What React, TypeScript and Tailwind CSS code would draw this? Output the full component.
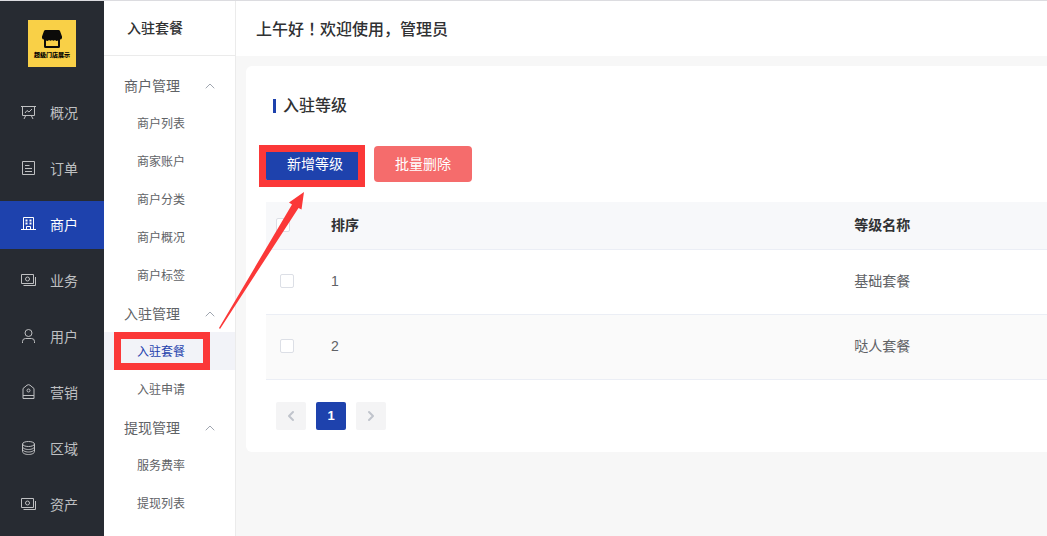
import type { ReactNode } from 'react';
import { ChevronLeft, ChevronRight, ChevronUp } from 'lucide-react';

interface NavItem {
  label: string;
  icon: ReactNode;
  active?: boolean;
}

interface MenuGroup {
  title: string;
  items: string[];
}

interface Level {
  sort: number;
  name: string;
}

const walletIcon = (
  <>
    <path d="M1.500 1.500h12v9h-12z" />
    <path d="M15.500 4v8.500h-12" />
    <circle cx="7.500" cy="6" r="2" />
  </>
);

const navItems: NavItem[] = [
  {
    label: '概况',
    icon: (
      <>
        <path d="M1 1.500h15M2.500 1.500v9h12v-9M5.500 11l-1.500 3M11.500 11l1.500 3" />
        <path d="M5 8l2-2.500 2 1.500 3-3" />
      </>
    ),
  },
  {
    label: '订单',
    icon: <path d="M2.500 .5h12v13h-12zM5 4.500h4.500M5 7.500h7M5 10.500h7" />,
  },
  {
    label: '商户',
    active: true,
    icon: (
      <>
        <path d="M3.500 12.500V.5h10v12M1 12.500h15" />
        <path d="M5.500 3.500h2M9.500 3.500h2M5.500 6.500h2M9.500 6.500h2" strokeWidth="2" />
        <path d="M6.500 12V9.500h4V12" />
      </>
    ),
  },
  { label: '业务', icon: walletIcon },
  {
    label: '用户',
    icon: (
      <>
        <circle cx="8.500" cy="4" r="3.500" />
        <path d="M2.500 14v-1.500a3 3 0 0 1 3-3h6a3 3 0 0 1 3 3V14" />
      </>
    ),
  },
  {
    label: '营销',
    icon: (
      <>
        <path d="M3 13.500V3.500L7 .2q1.500-1 3 0l4 3.300v10zM3 10.500h11" />
        <circle cx="8.500" cy="5.500" r="1.500" />
      </>
    ),
  },
  {
    label: '区域',
    icon: (
      <>
        <ellipse cx="8.500" cy="3" rx="6" ry="2.500" />
        <path d="M2.500 3v7.500c0 1.700 2.700 3 6 3s6-1.300 6-3V3" />
        <path d="M2.500 5.500c0 1.700 2.700 3 6 3s6-1.300 6-3M2.500 8c0 1.700 2.700 3 6 3s6-1.300 6-3" />
      </>
    ),
  },
  { label: '资产', icon: walletIcon },
];

const menuGroups: MenuGroup[] = [
  {
    title: '商户管理',
    items: ['商户列表', '商家账户', '商户分类', '商户概况', '商户标签'],
  },
  { title: '入驻管理', items: ['入驻套餐', '入驻申请'] },
  { title: '提现管理', items: ['服务费率', '提现列表'] },
];

const currentMenu = '入驻套餐';

const levels: Level[] = [
  { sort: 1, name: '基础套餐' },
  { sort: 2, name: '哒人套餐' },
];

const Logo = () => (
  <div className="mx-auto flex h-[47px] w-12 flex-col items-center bg-[#f9d047] pt-2.5">
    <svg width="20" height="18" viewBox="0 0 20 18" aria-hidden="true">
      <path
        d="M3.500 0h13q1 0 1.500 1l2 5.500V8q-.5 1.500-2 1.500v7q0 1.500-1.500 1.500h-13Q2 18 2 16.500v-7Q.5 9.500 0 8V6.500L2 1q.5-1 1.500-1z"
        fill="#0c0b09"
      />
      <path d="M4 10.500q1.500 1 3-.5 1.500 1.500 3 0 1.500 1.500 3 0 1.500 1.500 3 .5V16H4z" fill="#f9d047" />
    </svg>
    <span className="whitespace-nowrap text-[6px] leading-[15px] font-black text-black">
      超级门店展示
    </span>
  </div>
);

const Sidebar = () => (
  <aside className="w-26 shrink-0 bg-[#272b32] pt-[19px]">
    <Logo />
    <nav className="mt-[22px] flex flex-col gap-2">
      {navItems.map((item) => (
        <a
          key={item.label}
          href="#"
          className={`flex h-12 items-center gap-3.5 pl-5 text-sm ${
            item.active ? 'bg-[#1e42ad] text-white' : 'text-[#bfc0c2]'
          }`}
        >
          <svg
            width="16"
            height="16"
            viewBox="0 0 16 16"
            fill="none"
            stroke="currentColor"
            className="overflow-visible"
            aria-hidden="true"
          >
            {item.icon}
          </svg>
          {item.label}
        </a>
      ))}
    </nav>
  </aside>
);

const SubMenu = () => (
  <aside className="w-33 shrink-0 border-r border-[#ebebeb] bg-white">
    <h2 className="flex h-[55px] items-center border-b border-[#ebebeb] pl-[23px] text-sm font-medium text-[#303133]">
      入驻套餐
    </h2>
    <nav className="pt-2.5">
      {menuGroups.map((group) => (
        <div key={group.title}>
          <button
            type="button"
            className="flex h-[38px] w-full items-center justify-between pt-0.5 pr-[17px] pl-5 text-sm text-[#606266]"
          >
            {group.title}
            <ChevronUp className="h-4 w-4 text-[#a0a6b0]" strokeWidth={1.5} />
          </button>
          {group.items.map((item) => (
            <a
              key={item}
              href="#"
              className={`relative flex h-[38px] items-center pt-0.5 pl-[33px] text-xs ${
                item === currentMenu ? 'bg-[#f2f3f8] text-[#1e42ad]' : 'text-[#606266]'
              }`}
            >
              {item}
              {item === currentMenu && (
                <span className="absolute inset-y-0 left-2.5 w-24 border-[7px] border-[#fb3838]" />
              )}
            </a>
          ))}
        </div>
      ))}
    </nav>
  </aside>
);

const Checkbox = ({ label }: { label: string }) => (
  <input
    type="checkbox"
    aria-label={label}
    className="block h-3.5 w-3.5 appearance-none rounded-xs border border-[#dcdfe6] bg-white checked:bg-[#1e42ad]"
  />
);

const LevelTable = () => (
  <table className="w-full table-fixed text-left text-sm text-[#606266]">
    <thead>
      <tr className="h-[47px] border-b border-[#ebeef5] bg-[#f7f8fa] text-[#303133]">
        <th className="w-[55px] pl-2.5">
          <Checkbox label="全选" />
        </th>
        <th className="w-[67%] px-2.5 font-bold">排序</th>
        <th className="px-2.5 font-bold">等级名称</th>
      </tr>
    </thead>
    <tbody>
      {levels.map((level) => (
        <tr key={level.sort} className="h-[65px] border-b border-[#ebeef5] even:bg-[#fafafa]">
          <td className="pb-0.5 pl-3.5">
            <Checkbox label={level.name} />
          </td>
          <td className="px-2.5 pb-0.5">{level.sort}</td>
          <td className="px-2.5 pb-0.5">{level.name}</td>
        </tr>
      ))}
    </tbody>
  </table>
);

const Pagination = () => (
  <div className="mt-[22px] flex gap-2.5 pl-2.5">
    <button
      type="button"
      aria-label="上一页"
      disabled
      className="flex h-7 w-[30px] items-center justify-center rounded-xs bg-[#f4f4f5] text-[#c0c4cc]"
    >
      <ChevronLeft className="h-4 w-4" strokeWidth={3} />
    </button>
    <button
      type="button"
      className="h-7 w-[30px] rounded-xs bg-[#1e42ad] text-[13px] font-bold text-white"
    >
      1
    </button>
    <button
      type="button"
      aria-label="下一页"
      disabled
      className="flex h-7 w-[30px] items-center justify-center rounded-xs bg-[#f4f4f5] text-[#c0c4cc]"
    >
      <ChevronRight className="h-4 w-4" strokeWidth={3} />
    </button>
  </div>
);

export default function App() {
  return (
    <div className="relative flex min-h-screen overflow-hidden border-t border-[#dcdce0] bg-[#f7f7f7] font-['Liberation_Sans','Noto_Sans_CJK_SC',sans-serif]">
      <Sidebar />
      <SubMenu />
      <main className="min-w-0 flex-1">
        <header className="flex h-[55px] items-center bg-white pl-5">
          <h1 className="text-base font-medium text-[#303133]">
            上午好<span className="font-['Noto_Sans_CJK_JP',sans-serif]">！</span>欢迎使用，管理员
          </h1>
        </header>
        <section className="mt-2.5 ml-2.5 rounded-l-md bg-white pt-[29px] pb-[22px] pl-5">
          <h2 className="ml-[7px] flex items-center gap-[7px] text-base leading-[22px] font-medium text-[#303133]">
            <span className="h-3.5 w-[3px] bg-[#1e42ad]" />
            入驻等级
          </h2>
          <div className="mt-[29px] mb-5 flex gap-2.5">
            <button
              type="button"
              className="relative h-9 w-[98px] rounded bg-[#1e42ad] text-sm text-white"
            >
              新增等级
              <span className="absolute -top-px -left-[7px] h-[42px] w-[106px] border-[7px] border-[#fb3838]" />
            </button>
            <button type="button" className="h-9 w-[98px] rounded bg-[#f56c6c] text-sm text-white">
              批量删除
            </button>
          </div>
          <LevelTable />
          <Pagination />
        </section>
      </main>

      {/* arrow from the menu entry to the add button */}
      <svg
        width="86"
        height="137"
        viewBox="0 0 86 137"
        className="pointer-events-none absolute top-[191px] left-[219px]"
        aria-hidden="true"
      >
        <path
          d="M0 136L73 12.500 70 10.500 85 0 82.500 17.500 79.500 16 1 137z"
          fill="#fb3838"
        />
      </svg>
    </div>
  );
}
